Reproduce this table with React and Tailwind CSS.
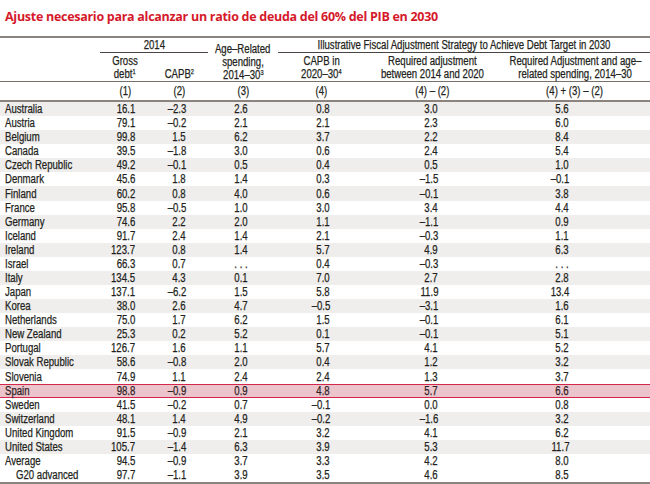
import React from "react";

const rows = [
  ["Australia", "16.1", "–2.3", "2.6", "0.8", "3.0", "5.6"],
  ["Austria", "79.1", "–0.2", "2.1", "2.1", "2.3", "6.0"],
  ["Belgium", "99.8", "1.5", "6.2", "3.7", "2.2", "8.4"],
  ["Canada", "39.5", "–1.8", "3.0", "0.6", "2.4", "5.4"],
  ["Czech Republic", "49.2", "–0.1", "0.5", "0.4", "0.5", "1.0"],
  ["Denmark", "45.6", "1.8", "1.4", "0.3", "–1.5", "–0.1"],
  ["Finland", "60.2", "0.8", "4.0", "0.6", "–0.1", "3.8"],
  ["France", "95.8", "–0.5", "1.0", "3.0", "3.4", "4.4"],
  ["Germany", "74.6", "2.2", "2.0", "1.1", "–1.1", "0.9"],
  ["Iceland", "91.7", "2.4", "1.4", "2.1", "–0.3", "1.1"],
  ["Ireland", "123.7", "0.8", "1.4", "5.7", "4.9", "6.3"],
  ["Israel", "66.3", "0.7", ". . .", "0.4", "–0.3", ". . ."],
  ["Italy", "134.5", "4.3", "0.1", "7.0", "2.7", "2.8"],
  ["Japan", "137.1", "–6.2", "1.5", "5.8", "11.9", "13.4"],
  ["Korea", "38.0", "2.6", "4.7", "–0.5", "–3.1", "1.6"],
  ["Netherlands", "75.0", "1.7", "6.2", "1.5", "–0.1", "6.1"],
  ["New Zealand", "25.3", "0.2", "5.2", "0.1", "–0.1", "5.1"],
  ["Portugal", "126.7", "1.6", "1.1", "5.7", "4.1", "5.2"],
  ["Slovak Republic", "58.6", "–0.8", "2.0", "0.4", "1.2", "3.2"],
  ["Slovenia", "74.9", "1.1", "2.4", "2.4", "1.3", "3.7"],
  ["Spain", "98.8", "–0.9", "0.9", "4.8", "5.7", "6.6"],
  ["Sweden", "41.5", "–0.2", "0.7", "–0.1", "0.0", "0.8"],
  ["Switzerland", "48.1", "1.4", "4.9", "–0.2", "–1.6", "3.2"],
  ["United Kingdom", "91.5", "–0.9", "2.1", "3.2", "4.1", "6.2"],
  ["United States", "105.7", "–1.4", "6.3", "3.9", "5.3", "11.7"],
  ["Average", "94.5", "–0.9", "3.7", "3.3", "4.2", "8.0"],
  ["G20 advanced", "97.7", "–1.1", "3.9", "3.5", "4.6", "8.5"],
];

// anchos de columna (suman 650 con la de país)
const cols = [
  "w-[50px] pr-[15px]",
  "w-[58px] pr-[22px]",
  "w-[70px] pr-[30px]",
  "w-[87px] pr-[35px]",
  "w-[135px] pr-[62px]",
  "w-[150px] pr-[81px]",
];

// texto estrecho tipo "Arial Narrow"
function N({ children, o = "origin-left" }) {
  return <span className={`inline-block whitespace-nowrap scale-x-[0.8] ${o}`}>{children}</span>;
}

function Sup({ children }) {
  return <sup className="text-[7px] top-[-4px]">{children}</sup>;
}

// una línea de cabecera con altura fija
function L({ children }) {
  return (
    <div className="h-[13px] leading-[13px] flex justify-center">
      <N o="origin-center">{children}</N>
    </div>
  );
}

function rowBg(i, name) {
  if (name === "Spain") return "bg-[#ebc5cb] border-y border-[#d4264b] text-[#3a2329]";
  if (name === "G20 advanced") return "bg-white";
  return i % 2 === 0 ? "bg-[#efeeec]" : "bg-white";
}

export default function App() {
  return (
    <div className="w-[650px] h-[484px] bg-white overflow-hidden text-[#231f20]">
      {/* ===== TITULO ===== */}
      <div className="h-[36px] flex items-center pl-[5px] pb-[1px]">
        <h1
          className="text-[12.5px] font-bold text-[#d5192b] tracking-[-0.28px]"
          style={{ fontFamily: "'Open Sans', sans-serif" }}
        >
          Ajuste necesario para alcanzar un ratio de deuda del 60% del PIB en 2030
        </h1>
      </div>

      <div
        className="text-[12px] [-webkit-text-stroke:0.25px_#231f20]"
        style={{ fontFamily: "'Liberation Sans', Arial, sans-serif" }}
      >
        {/* ===== CABECERA ===== */}
        <div className="border-t-2 border-[#8a837e] flex border-b border-b-[#77706b] h-[46px]">
          <div className="w-[100px]" />
          <div className="w-[108px] flex flex-col">
            <div className="h-[15px] pt-[1px] leading-[12px] flex justify-center border-b border-[#4a4542]">
              <N o="origin-center">2014</N>
            </div>
            <div className="flex pt-[2px]">
              <div className="w-[50px] flex flex-col">
                <L>Gross</L>
                <L>
                  debt<Sup>1</Sup>
                </L>
              </div>
              <div className="w-[58px] flex flex-col pt-[13px]">
                <L>
                  CAPB<Sup>2</Sup>
                </L>
              </div>
            </div>
          </div>
          <div className="w-[70px] flex flex-col pt-[5px]">
            <L>Age–Related</L>
            <L>spending,</L>
            <L>
              2014–30<Sup>3</Sup>
            </L>
          </div>
          <div className="w-[372px] flex flex-col">
            <div className="h-[15px] pt-[1px] leading-[12px] flex justify-center border-b border-[#4a4542]">
              <N o="origin-center">
                Illustrative Fiscal Adjustment Strategy to Achieve Debt Target in 2030
              </N>
            </div>
            <div className="flex pt-[2px]">
              <div className="w-[87px] flex flex-col">
                <L>CAPB in</L>
                <L>
                  2020–30<Sup>4</Sup>
                </L>
              </div>
              <div className="w-[135px] flex flex-col">
                <L>Required adjustment</L>
                <L>between 2014 and 2020</L>
              </div>
              <div className="w-[150px] flex flex-col">
                <L>Required Adjustment and age–</L>
                <L>related spending, 2014–30</L>
              </div>
            </div>
          </div>
        </div>

        {/* ===== NUMERACION ===== */}
        <div className="flex h-[20px] items-center border-b-2 border-[#8a837e] pb-[1px]">
          <div className="w-[100px]" />
          <div className="w-[50px] flex justify-center"><N o="origin-center">(1)</N></div>
          <div className="w-[58px] flex justify-center"><N o="origin-center">(2)</N></div>
          <div className="w-[70px] flex justify-center"><N o="origin-center">(3)</N></div>
          <div className="w-[87px] flex justify-center"><N o="origin-center">(4)</N></div>
          <div className="w-[135px] flex justify-center"><N o="origin-center">(4) – (2)</N></div>
          <div className="w-[150px] flex justify-center"><N o="origin-center">(4) + (3) – (2)</N></div>
        </div>

        {/* ===== FILAS ===== */}
        <div className="border-b-[3px] border-[#8a837e]">
          {rows.map((r, i) => (
            <div
              key={r[0]}
              className={`flex items-center h-[14.08px] leading-[12px] ${rowBg(i, r[0])}`}
            >
              <div className={`w-[100px] ${r[0] === "G20 advanced" ? "pl-[16px]" : "pl-[5px]"}`}>
                <N>{r[0]}</N>
              </div>
              {r.slice(1).map((v, j) => (
                <div key={j} className={`${cols[j]} text-right`}>
                  <N o="origin-right">{v}</N>
                </div>
              ))}
            </div>
          ))}
        </div>
      </div>
    </div>
  );
}
